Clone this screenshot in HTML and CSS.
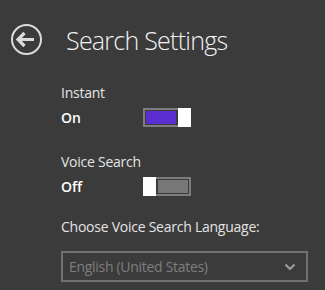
FILE: index.html
```html
<!DOCTYPE html>
<html lang="en">
<head>
<meta charset="utf-8">
<title>Search Settings</title>
<link rel="stylesheet" href="styles.css">
</head>
<body>
<div class="page">
  <header class="header">
    <button class="back" aria-label="Back">
      <svg width="31" height="31" viewBox="0 0 31 31">
        <circle cx="15.5" cy="15.5" r="14.5" fill="none" stroke="#dcdcdc" stroke-width="2"/>
        <path d="M7 15.5 H23 M13.5 9 L7 15.5 L13.5 22" fill="none" stroke="#dcdcdc" stroke-width="3.2" stroke-linejoin="miter"/>
      </svg>
    </button>
    <h1 class="title">Search Settings</h1>
  </header>
  <main class="settings">
    <section class="setting">
      <div class="label">Instant</div>
      <div class="row">
        <span class="state">On</span>
        <span class="toggle on"><span class="fill"></span><span class="thumb"></span></span>
      </div>
    </section>
    <section class="setting">
      <div class="label">Voice Search</div>
      <div class="row">
        <span class="state">Off</span>
        <span class="toggle off"><span class="fill"></span><span class="thumb"></span></span>
      </div>
    </section>
    <section class="setting lang">
      <div class="label">Choose Voice Search Language:</div>
      <div class="select">
        <span class="select-text">English (United States)</span>
        <svg class="chevron" width="12" height="8" viewBox="0 0 12 8">
          <path d="M1.5 1.5 L6 6 L10.5 1.5" fill="none" stroke="#9a9a9a" stroke-width="2.2"/>
        </svg>
      </div>
    </section>
  </main>
</div>
</body>
</html>
```
FILE: styles.css
```css
html, body {
  margin: 0;
  padding: 0;
}
body {
  background: #3b3b3b;
  font-family: "Open Sans", "Noto Sans", sans-serif;
  color: #e8e8e8;
  width: 325px;
  height: 290px;
  overflow: hidden;
}
.page {
  display: flex;
  flex-direction: column;
}
.header {
  display: flex;
  align-items: center;
  gap: 24px;
  padding: 24px 0 0 11px;
  height: 31px;
}
.back {
  display: block;
  width: 31px;
  height: 31px;
  padding: 0;
  margin: 0;
  border: 0;
  background: none;
}
.back svg {
  display: block;
}
.title {
  margin: 0;
  font-size: 25px;
  font-weight: 300;
  color: #f2f2f2;
  line-height: 32px;
  letter-spacing: -0.75px;
}
.settings {
  display: flex;
  flex-direction: column;
  padding-left: 61px;
  margin-top: 28px;
}
.setting {
  display: flex;
  flex-direction: column;
  gap: 5px;
}
.setting + .setting {
  margin-top: 25px;
}
.setting.lang {
  margin-top: 21px;
  gap: 14px;
}
.label {
  font-size: 14px;
  line-height: 20px;
  color: #e4e4e4;
  letter-spacing: -0.25px;
}
.row {
  display: flex;
  align-items: center;
  height: 19px;
}
.state {
  width: 82px;
  font-size: 14px;
  font-weight: 600;
  color: #ffffff;
  line-height: 20px;
}
.toggle {
  position: relative;
  display: flex;
  box-sizing: border-box;
  width: 48px;
  height: 19px;
  border: 2px solid #7d7d7d;
  padding: 1px;
}
.toggle .fill {
  flex: 1;
}
.toggle.on .fill {
  background: #5a2ed0;
  margin-right: 12px;
}
.toggle.off .fill {
  background: #787878;
  margin-left: 12px;
}
.toggle .thumb {
  position: absolute;
  top: -2px;
  bottom: -2px;
  width: 13px;
  background: #ffffff;
}
.toggle.on .thumb {
  right: -2px;
}
.toggle.off .thumb {
  left: -2px;
}
.select {
  display: flex;
  align-items: center;
  justify-content: space-between;
  box-sizing: border-box;
  width: 247px;
  height: 31px;
  border: 2px solid #707070;
  padding: 0 10px 0 6px;
}
.select-text {
  font-size: 14px;
  color: #7e7e7e;
  line-height: 20px;
  letter-spacing: -0.3px;
}
.chevron {
  display: block;
}
```
